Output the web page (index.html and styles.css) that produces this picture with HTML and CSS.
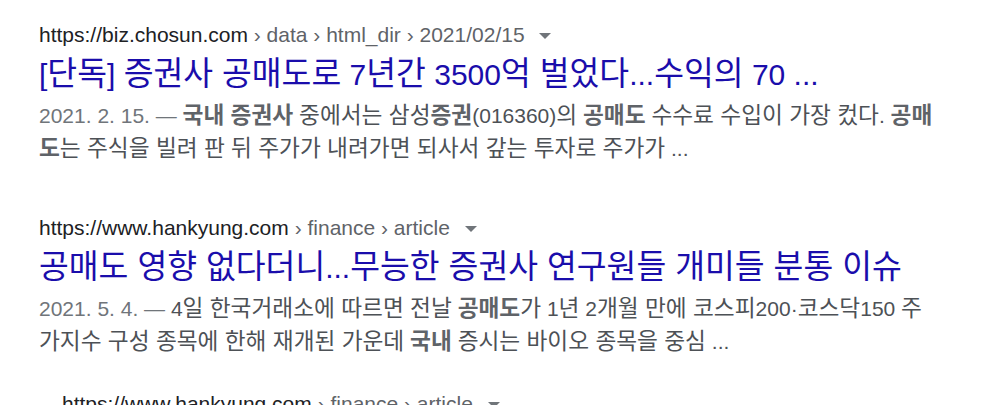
FILE: index.html
```html
<!DOCTYPE html>
<html lang="ko">
<head>
<meta charset="UTF-8">
<meta name="viewport" content="width=device-width, initial-scale=1.0">
<title>공매도 국내 증권사 - 검색결과</title>
<link rel="stylesheet" href="styles.css">
</head>
<body>
<div class="results">

    <div class="result">
        <div class="cite">
            <span class="host">https://biz.chosun.com</span>
            <span class="crumbs"> › data › html_dir › 2021/02/15</span>
            <span class="more"></span>
        </div>
        <a class="title" href="#">[<span class="ko">단독</span>] <span class="ko">증권사 공매도로</span> 7<span class="ko">년간</span> 3500<span class="ko">억 벌었다</span>...<span class="ko">수익의</span> 70 ...</a>
        <div class="snippet">
            <span class="date">2021. 2. 15. — </span><b class="ko">국내 증권사</b> <span class="ko">중에서는 삼성</span><b class="ko">증권</b>(016360)<span class="ko">의</span> <b class="ko">공매도</b> <span class="ko">수수료 수입이 가장 컸다</span>. <b class="ko">공매도</b><span class="ko">는 주식을 빌려 판 뒤 주가가 내려가면 되사서 갚는 투자로 주가가</span> ...
        </div>
    </div>

    <div class="result">
        <div class="cite">
            <span class="host">https://www.hankyung.com</span>
            <span class="crumbs"> › finance › article</span>
            <span class="more"></span>
        </div>
        <a class="title" href="#"><span class="ko">공매도 영향 없다더니</span>...<span class="ko">무능한 증권사 연구원들 개미들 분통 이슈</span></a>
        <div class="snippet">
            <span class="date">2021. 5. 4. — </span>4<span class="ko">일 한국거래소에 따르면 전날</span> <b class="ko">공매도</b><span class="ko">가</span> 1<span class="ko">년</span> 2<span class="ko">개월 만에 코스피</span>200·<span class="ko">코스닥</span>150 <span class="ko">주가지수 구성 종목에 한해 재개된 가운데</span> <b class="ko">국내</b> <span class="ko">증시는 바이오 종목을 중심</span> ...
        </div>

        <div class="result sub">
            <div class="cite">
                <span class="host">https://www.hankyung.com</span>
                <span class="crumbs"> › finance › article</span>
                <span class="more"></span>
            </div>
        </div>
    </div>

</div>
</body>
</html>
```

FILE: styles.css
```css
body {
    margin: 0;
    background: #fff;
    font-family: 'Liberation Sans', Arial, 'Noto Sans CJK KR', sans-serif;
    overflow: hidden;
}
.results {
    width: 900px;
    padding: 20px 0 0 39px;
}
.result {
    margin-bottom: 48px;
}
.result.sub {
    margin: 31px 0 0 23px;
}
.cite {
    font-size: 21px;
    line-height: 30px;
    height: 30px;
    white-space: nowrap;
    margin-bottom: 5px;
}
.host {
    color: #202124;
}
.crumbs {
    color: #5f6368;
}
.more {
    display: inline-block;
    width: 0;
    height: 0;
    margin-left: 9px;
    vertical-align: middle;
    border-left: 6px solid transparent;
    border-right: 6px solid transparent;
    border-top: 6px solid #70757a;
}
.title {
    display: block;
    font-size: 30px;
    line-height: 39px;
    color: #1a0dab;
    text-decoration: none;
    white-space: nowrap;
    margin-bottom: 5px;
}
.snippet {
    font-size: 21px;
    line-height: 33px;
    color: #4d5156;
}
.snippet b {
    color: #5f6368;
}
/* hangul runs: match the wider korean face of the original */
.ko {
    font-size: 1.08em;
    line-height: 1;
}
.date {
    color: #70757a;
}
```
